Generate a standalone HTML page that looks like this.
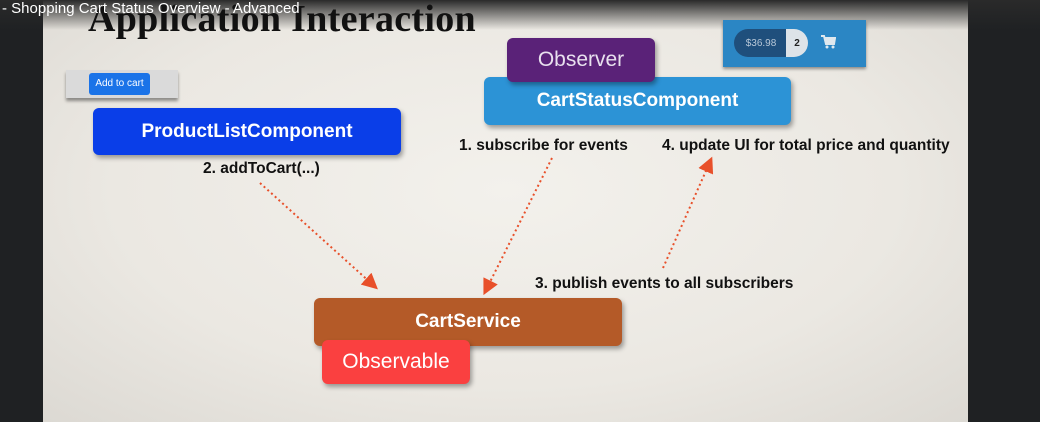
<!DOCTYPE html>
<html><head><meta charset="utf-8"><style>
body{margin:0;width:1040px;height:422px;overflow:hidden;background:#1f2123;position:relative;font-family:"Liberation Sans",sans-serif}
.slide{position:absolute;left:43px;top:0;width:925px;height:422px;background:radial-gradient(ellipse at 50% 45%,#f3f1ec 0%,#ebe8e2 60%,#dcd9d3 100%)}
.top{position:absolute;left:0;top:0;width:1040px;height:30px;background:linear-gradient(#2a2a2a,rgba(40,40,40,0))}
.ttl{position:absolute;left:2px;top:0;color:#fff;font-size:15px;line-height:18px}
.h{position:absolute;left:88px;top:-3px;font-family:"Liberation Serif",serif;font-weight:bold;font-size:38px;color:#111;letter-spacing:0.3px}
.box{position:absolute;color:#fff;font-weight:bold;text-align:center;border-radius:6px;box-shadow:2px 3px 5px rgba(0,0,0,.35)}
.lbl{position:absolute;font-weight:bold;font-size:15.5px;color:#111}
</style></head><body>
<div class="slide"></div>
<div class="top"></div>
<div class="h">Application Interaction</div>
<div class="ttl">- Shopping Cart Status Overview - Advanced</div>
<div style="position:absolute;left:66px;top:70px;width:112px;height:28px;background:#dadada;box-shadow:0 3px 3px rgba(0,0,0,.4)"></div>
<div style="position:absolute;left:89px;top:73px;width:61px;height:22px;background:#1a73e8;border-radius:3px;color:#fff;font-size:10px;line-height:22px;text-align:center">Add to cart</div>
<div style="position:absolute;left:723px;top:20px;width:143px;height:47px;background:#2b86c4;box-shadow:0 2px 3px rgba(0,0,0,.4)"></div>
<div style="position:absolute;left:734px;top:29px;width:54px;height:28px;background:#1f4f7c;border-radius:14px 0 0 14px;color:#b8c8d8;font-size:10px;line-height:30px;text-align:center">$36.98</div>
<div style="position:absolute;left:786px;top:29px;width:22px;height:28px;background:#dde3e8;border-radius:0 14px 14px 0;color:#222;font-size:10px;font-weight:bold;line-height:30px;text-align:center">2</div>
<svg style="position:absolute;left:820px;top:34px" width="16" height="16" viewBox="0 0 16 16"><path d="M1 2h3l2 8h8l1-6H5" fill="none" stroke="#dfe8ee" stroke-width="2"/><rect x="5" y="4" width="9" height="5" fill="#dfe8ee"/><circle cx="7" cy="13" r="1.5" fill="#dfe8ee"/><circle cx="13" cy="13" r="1.5" fill="#dfe8ee"/></svg>
<div class="box" style="left:484px;top:77px;width:307px;height:48px;background:#2c93d6;font-size:19px;line-height:48px">CartStatusComponent</div>
<div class="box" style="left:507px;top:38px;width:148px;height:44px;background:#5a2278;font-weight:normal;font-size:21px;line-height:44px;color:#e8e0ee">Observer</div>
<div class="box" style="left:93px;top:108px;width:308px;height:47px;background:#0a3ee8;font-size:19px;line-height:47px">ProductListComponent</div>
<div class="lbl" style="left:203px;top:160px">2. addToCart(...)</div>
<div class="lbl" style="left:459px;top:137px">1. subscribe for events</div>
<div class="lbl" style="left:662px;top:137px">4. update UI for total price and quantity</div>
<div class="lbl" style="left:535px;top:275px">3. publish events to all subscribers</div>
<svg style="position:absolute;left:0;top:0" width="1040" height="422">
<defs><marker id="a" markerWidth="8" markerHeight="8" refX="4" refY="4" orient="auto"><path d="M0 0L8 4L0 8z" fill="#e8502a"/></marker></defs>
<g stroke="#e8502a" stroke-width="2" stroke-dasharray="2 3" fill="none">
<line x1="260" y1="183" x2="372" y2="284" marker-end="url(#a)"/>
<line x1="552" y1="158" x2="487" y2="288" marker-end="url(#a)"/>
<line x1="663" y1="268" x2="709" y2="164" marker-end="url(#a)"/>
</g></svg>
<div class="box" style="left:314px;top:298px;width:308px;height:48px;background:#b45a28;font-size:19px;line-height:48px">CartService</div>
<div class="box" style="left:322px;top:340px;width:148px;height:44px;background:#fa4040;font-weight:normal;font-size:21px;line-height:44px">Observable</div>
</body></html>
